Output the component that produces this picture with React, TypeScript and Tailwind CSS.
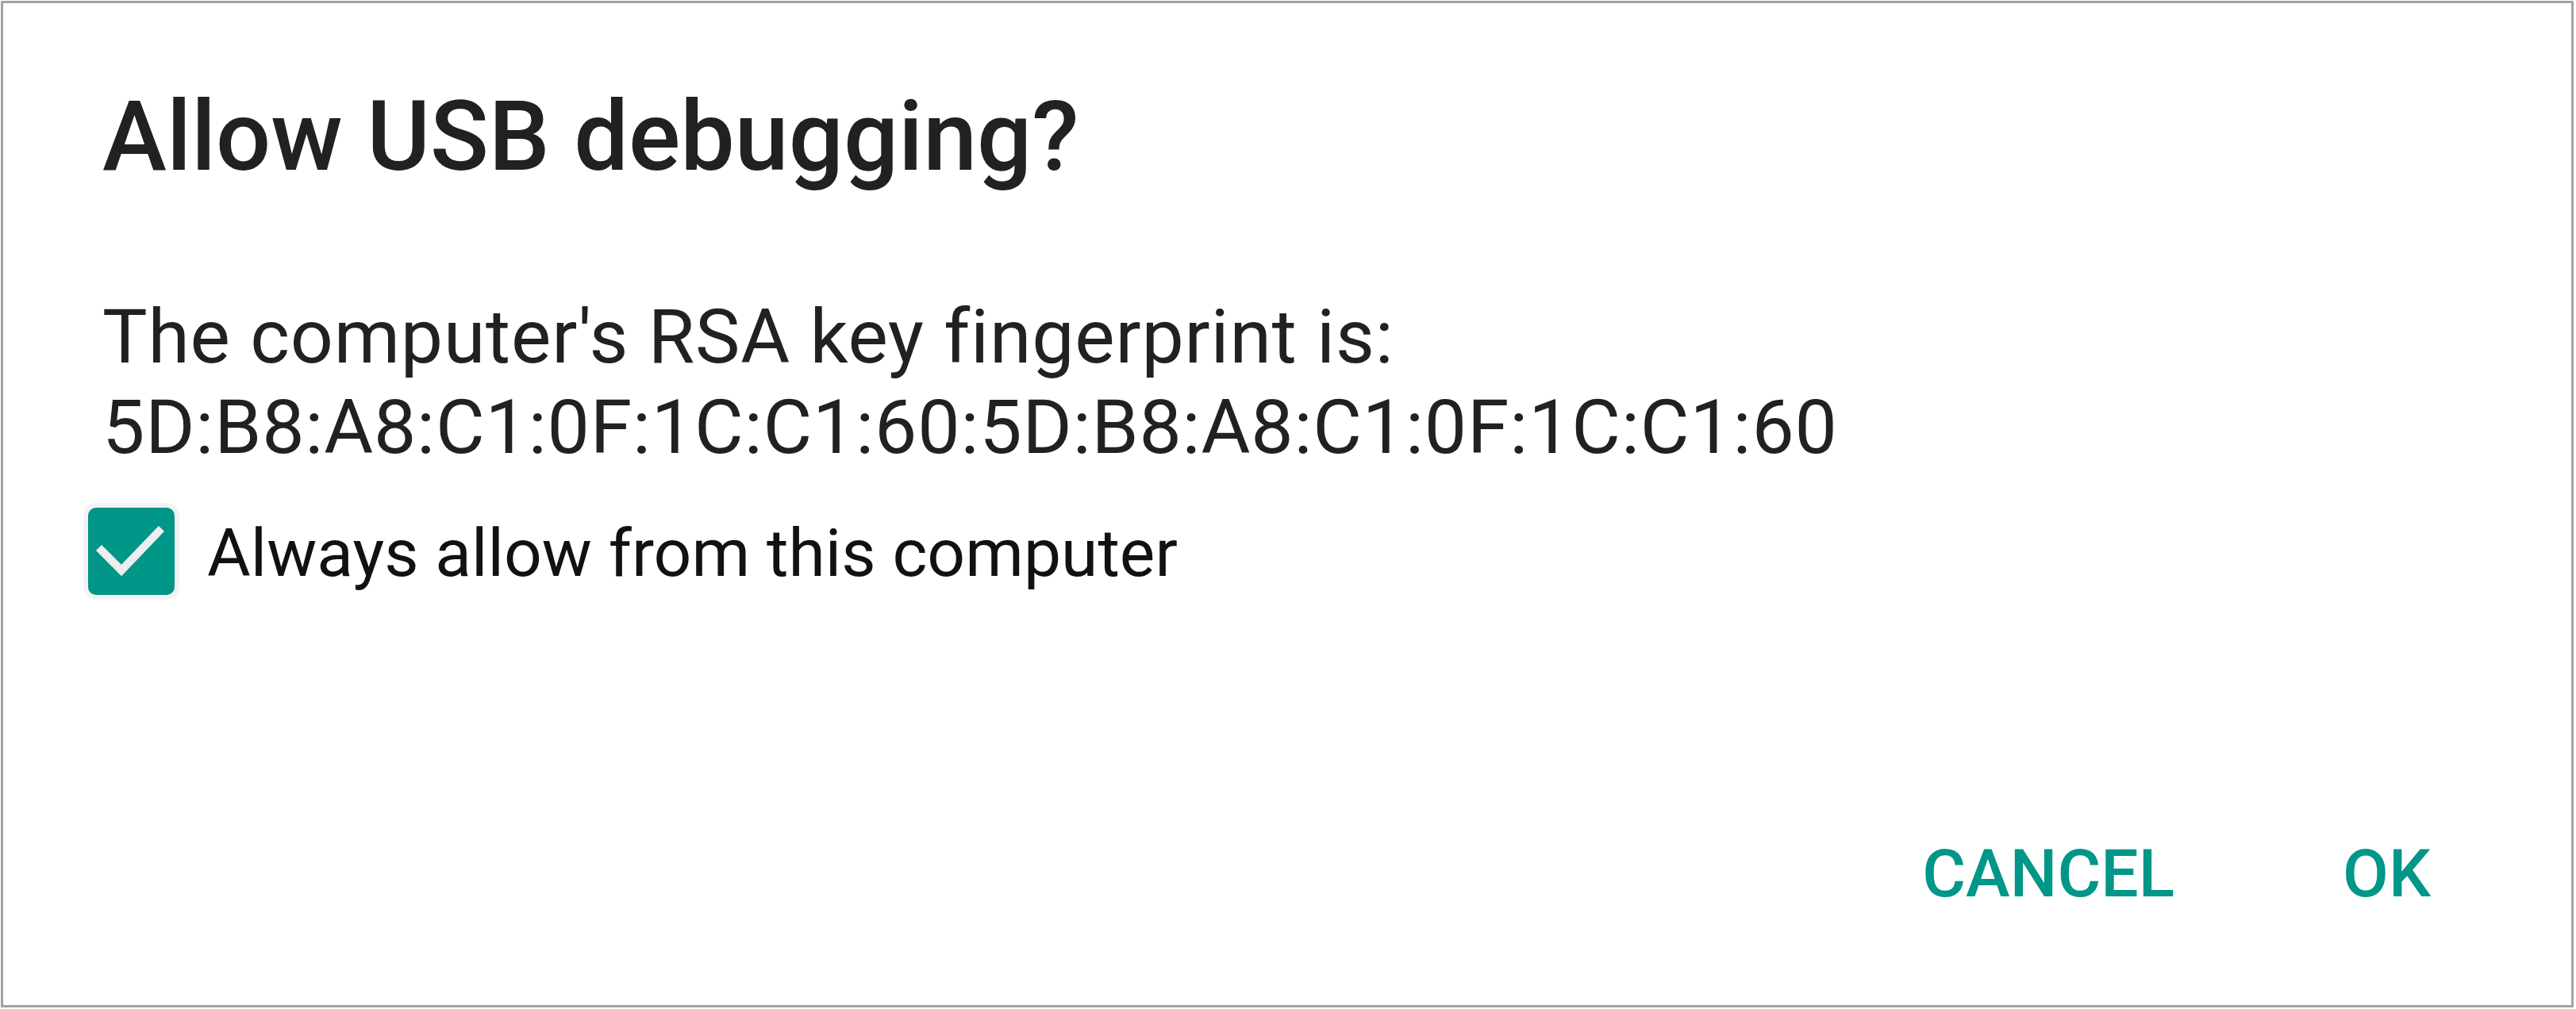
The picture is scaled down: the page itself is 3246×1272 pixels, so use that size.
import React from "react";

const teal = "#009688";

function CheckBox() {
    return (
        <div className="w-[121px] h-[122px] p-[6px] rounded-[16px] bg-[#f3f3f3] shrink-0">
            <div className="w-full h-full rounded-[10px] bg-[#009688]">
                <svg viewBox="0 0 109 110" className="w-full h-full">
                    <path
                        d="M17 54 L42 79 L89 30"
                        fill="none"
                        stroke="#eeeeee"
                        strokeWidth={10}
                        strokeLinecap="square"
                    />
                </svg>
            </div>
        </div>
    );
}

export default function App() {
    return (
        <div className="w-[3246px] h-[1272px] bg-white pl-px pt-px">
            <div
                className="w-[3242px] h-[1269px] border-[3px] border-[#a2a2a2] bg-white flex flex-col px-[125px]"
                style={{ fontFamily: "Roboto, 'Noto Sans', sans-serif" }}
            >
                <h1 className="mt-[108px] text-[122px] leading-[122px] font-medium text-[#212121]">
                    Allow USB debugging?
                </h1>

                <p className="mt-[134px] text-[95px] leading-[114px] tracking-[0.8px] text-[#212121]">
                    The computer's RSA key fingerprint is:
                    <br />
                    5D:B8:A8:C1:0F:1C:C1:60:5D:B8:A8:C1:0F:1C:C1:60
                </p>

                <div className="mt-[38px] -ml-[24px] flex items-center gap-[35px]">
                    <CheckBox />
                    <span className="mt-[6px] text-[84px] leading-[100px] text-[#111111]">
                        Always allow from this computer
                    </span>
                </div>

                <div className="mt-auto pb-[115px] pr-[52px] flex justify-end gap-[212px] text-[84px] leading-[100px] font-medium" style={{ color: teal }}>
                    <button className="uppercase">Cancel</button>
                    <button className="uppercase">OK</button>
                </div>
            </div>
        </div>
    );
}
